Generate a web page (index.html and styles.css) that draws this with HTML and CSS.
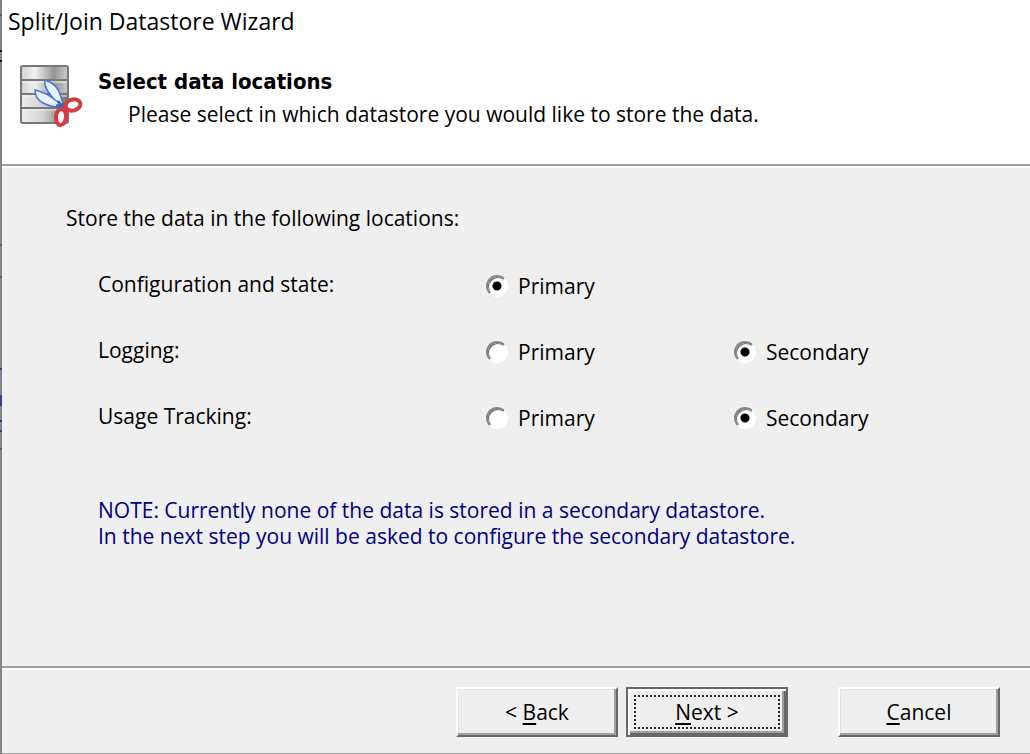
FILE: index.html
```
<!DOCTYPE html>
<html lang="en">
<head>
    <meta charset="UTF-8">
    <meta name="viewport" content="width=device-width, initial-scale=1.0">
    <title>Split/Join Datastore Wizard</title>
    <link rel="stylesheet" href="styles.css">
</head>
<body>
    <form class="wizard">
        <header class="banner">
            <div class="titlebar">Split/Join Datastore Wizard</div>
            <div class="heading">
                <svg class="icon" viewBox="0 0 64 64" aria-hidden="true">
                    <defs>
                        <linearGradient id="metal">
                            <stop offset="0" stop-color="#d2d2d2"/>
                            <stop offset="0.3" stop-color="#f0f0f0"/>
                            <stop offset="0.7" stop-color="#969696"/>
                            <stop offset="1" stop-color="#cccccc"/>
                        </linearGradient>
                        <linearGradient id="metalLow">
                            <stop offset="0" stop-color="#eeeeee"/>
                            <stop offset="0.45" stop-color="#d4d4d4"/>
                            <stop offset="1" stop-color="#707070"/>
                        </linearGradient>
                    </defs>
                    <rect x="1" y="1" width="47" height="57" rx="2" fill="url(#metal)"/>
                    <path d="M1 30h47v28H1z" fill="url(#metalLow)"/>
                    <path d="M2 15h45M2 29h45M2 43h45" stroke="#777" stroke-width="2"/>
                    <path d="M2 17h45M2 31h45M2 45h45" stroke="#f2f2f2"/>
                    <rect x="1" y="1" width="47" height="57" rx="2" fill="none" stroke="#777" stroke-width="2"/>
                    <path d="M25 15q-1 6 4 13l11 14 3-3-3-10q-3-10-15-14z" fill="#e8f1ff" stroke="#4576cc" stroke-width="1.5"/>
                    <path d="M15 25q0 9 8 13 8 4 16 4l2-3q-6-4-10-7-7-5-16-7z" fill="#e8f1ff" stroke="#4576cc" stroke-width="1.5"/>
                    <path d="M38 36l4 6M36 41l9-1" stroke="#3567bd" stroke-width="3"/>
                    <ellipse cx="53" cy="40" rx="7.5" ry="5.5" transform="rotate(-14 53 40)" fill="#fff" stroke="#d73b40" stroke-width="4"/>
                    <ellipse cx="41" cy="52" rx="5" ry="8" transform="rotate(5 41 52)" fill="#fff" stroke="#d73b40" stroke-width="4"/>
                </svg>
                <div>
                    <h1>Select data locations</h1>
                    <p>Please select in which datastore you would like to store the data.</p>
                </div>
            </div>
        </header>

        <main class="content">
            <p class="intro">Store the data in the following locations:</p>

            <div class="locations">
                <div class="row" role="radiogroup" aria-labelledby="configLabel">
                    <span id="configLabel">Configuration and state:</span>
                    <label class="option"><input type="radio" name="config" checked>Primary</label>
                </div>
                <div class="row" role="radiogroup" aria-labelledby="loggingLabel">
                    <span id="loggingLabel">Logging:</span>
                    <label class="option"><input type="radio" name="logging">Primary</label>
                    <label class="option"><input type="radio" name="logging" checked>Secondary</label>
                </div>
                <div class="row" role="radiogroup" aria-labelledby="usageLabel">
                    <span id="usageLabel">Usage Tracking:</span>
                    <label class="option"><input type="radio" name="usage">Primary</label>
                    <label class="option"><input type="radio" name="usage" checked>Secondary</label>
                </div>
            </div>

            <p class="note">NOTE: Currently none of the data is stored in a secondary datastore.<br>In the next step you will be asked to configure the secondary datastore.</p>
        </main>

        <footer class="actions">
            <button type="button">&lt; <u>B</u>ack</button>
            <button type="button" class="default"><span class="focus"><u>N</u>ext &gt;</span></button>
            <button type="button" class="cancel"><u>C</u>ancel</button>
        </footer>
    </form>
</body>
</html>
```
FILE: styles.css
```
* {
    box-sizing: border-box;
}
body {
    margin: 0;
    padding-left: 2px;
    font-family: Tahoma, "Open Sans", sans-serif;
    font-size: 21px;
    line-height: 26px;
    color: #000;
    /* sliver of the window behind the dialog */
    background: linear-gradient(#80848e 14px, #665f5a 14px 16px, #80848e 16px 50px, #111 50px 52px, #80848e 52px 60px, #111 60px 62px, #80848e 62px 244px, #665f5a 244px 246px, #80848e 246px 276px, #665f5a 276px 278px, #80848e 278px 368px, #2c4489 368px 370px, #80848e 370px 395px, #2c4489 395px 406px, #80848e 406px 420px, #2c4489 420px 422px, #80848e 422px 430px, #2c4489 430px 432px, #80848e 432px 448px, #665f5a 448px 450px, #80848e 450px);
}
h1, p {
    margin: 0;
}
.wizard {
    display: flex;
    flex-direction: column;
    min-height: 100vh;
    background-color: #efefef;
    border-bottom: 1px solid #a8a8a8;
}
.banner {
    height: 166px;
    background-color: #fff;
    border-bottom: 2px solid #a0a0a0;
}
.titlebar {
    padding: 8px 6px 10px;
    font-family: "Segoe UI", "Open Sans", sans-serif;
    font-size: 23px;
}
.heading {
    display: flex;
    gap: 14px;
    padding: 21px 18px;
}
.icon {
    width: 64px;
    height: 64px;
}
.heading h1 {
    margin-top: 4px;
    margin-bottom: 6px;
    font-family: Tahoma, "DejaVu Sans Condensed", sans-serif;
    font-size: 22px;
    line-height: 26px;
}
.heading p {
    padding-left: 30px;
}
.content {
    flex: 1;
    padding: 37px 64px;
    border-top: 2px solid #fff;
}
.locations {
    display: grid;
    gap: 38px;
    margin-top: 40px;
    padding-left: 32px;
}
.row {
    display: grid;
    grid-template-columns: 388px 248px 1fr;
}
.option {
    display: flex;
    align-items: center;
    gap: 10px;
    padding-top: 2px;
}
.option input {
    appearance: none;
    width: 22px;
    height: 22px;
    margin: 0;
    border: 2px solid;
    border-color: #858585 #fff #fff #858585;
    border-radius: 50%;
    background-color: #fff;
    box-shadow: inset 1px 1px 0 #696969;
}
.option input:checked {
    background-image: radial-gradient(circle, #000 4px, transparent 5px);
}
.note {
    margin-top: 66px;
    padding-left: 32px;
    color: #000080;
}
.actions {
    display: flex;
    justify-content: flex-end;
    gap: 8px;
    padding: 19px 30px 16px;
    border-top: 2px solid #a0a0a0;
    box-shadow: inset 0 2px 0 #fff;
}
button {
    width: 162px;
    height: 50px;
    padding: 0;
    font: inherit;
    color: #000;
    background-color: #efefef;
    border: 2px solid;
    border-color: #fff #696969 #696969 #fff;
    box-shadow: inset -2px -2px 0 #a0a0a0, inset 1px 1px 0 #e3e3e3;
}
button u {
    text-underline-offset: 3px;
}
.default {
    padding: 6px;
    border-color: #696969;
    box-shadow: inset 2px 2px 0 #fff, inset -2px -2px 0 #696969, inset -4px -4px 0 #a0a0a0;
}
.focus {
    display: flex;
    align-items: center;
    justify-content: center;
    height: 100%;
    border: 2px dotted #222;
    white-space: pre;
}
.cancel {
    margin-left: 42px;
}
```
